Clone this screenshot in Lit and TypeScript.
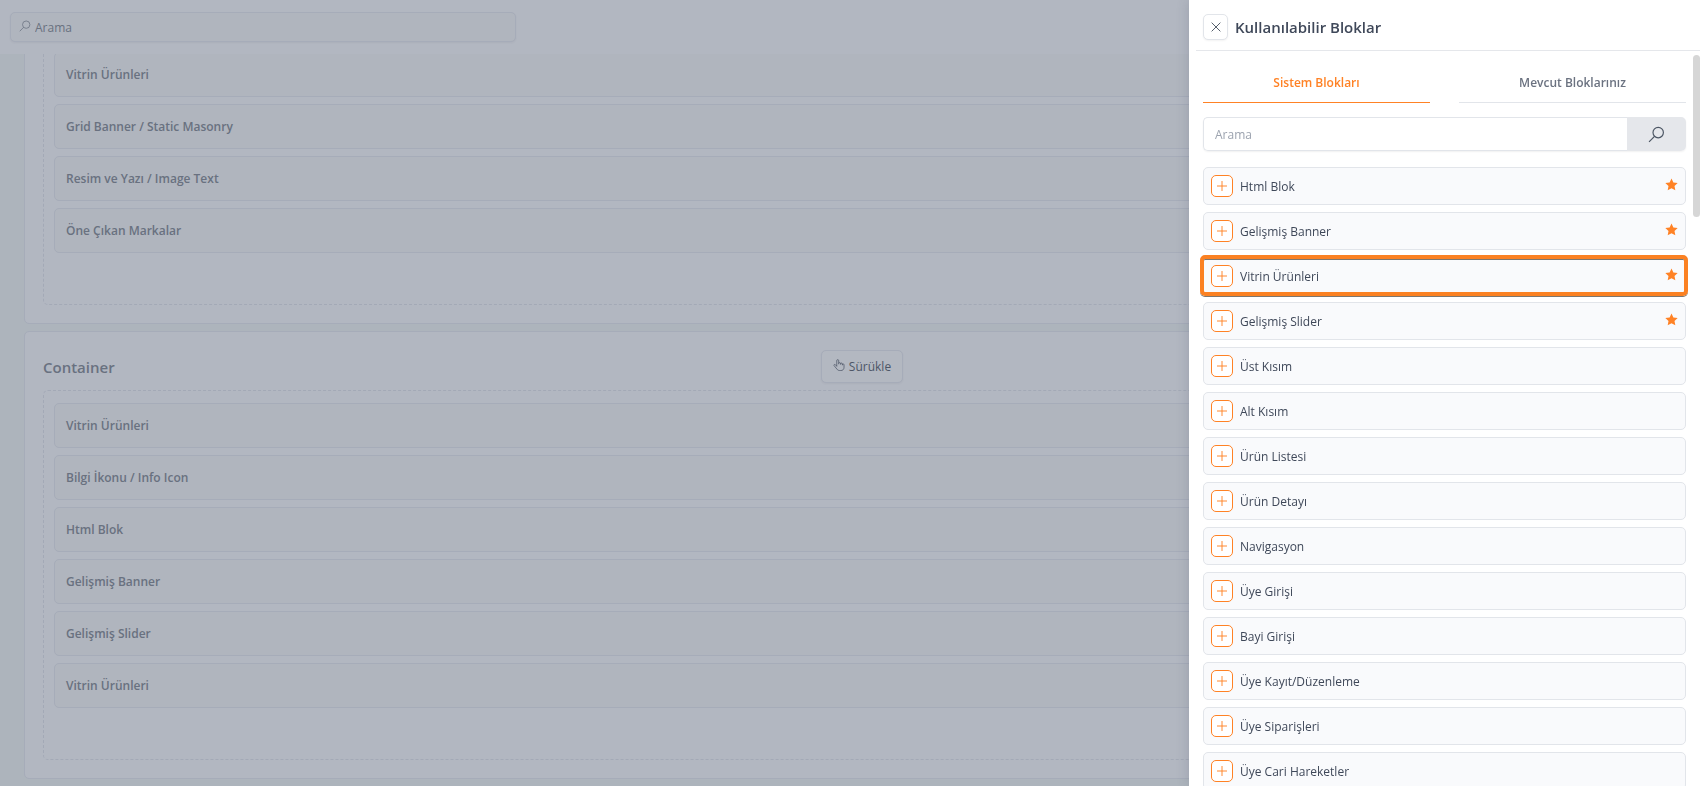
import { LitElement, html, css, svg, nothing } from "lit";
import { customElement, property, state } from "lit/decorators.js";
import { classMap } from "lit/directives/class-map.js";

const magnifier = svg`<circle cx="9.600" cy="6.200" r="4.900"></circle><path d="M6.100 9.800 1 15"></path>`;

const pageIcon = (body: unknown, cls: string) => html`
  <svg class=${cls} viewBox="0 0 16 16" fill="none" stroke="currentColor" aria-hidden="true">${body}</svg>
`;

@customElement("block-container")
class BlockContainer extends LitElement {
  @property() heading = "Container";
  @property({ attribute: false }) blocks: string[] = [];

  static styles = css`
    :host { display: block; }
    .card {
      background: #b2b7c1;
      border: 1px solid #a6acb9;
      border-radius: 5px;
      padding: 18px;
    }
    .head {
      display: grid;
      grid-template-columns: 1fr auto 1fr;
      align-items: center;
      margin-bottom: 7px;
    }
    h2 { margin: 0; font-size: 15px; line-height: 24px; font-weight: 600; color: #697180; }
    .drag {
      display: flex;
      align-items: center;
      gap: 4px;
      height: 33px;
      padding: 1px 11px 0;
      font: inherit;
      color: #4d5667;
      background: #b3b8c1;
      border: 1px solid #a6acb9;
      border-radius: 5px;
      box-shadow: 0 1px 2px rgba(60, 70, 90, 0.06);
    }
    .hand { width: 12px; height: 12px; margin-bottom: 4px; }
    .zone {
      display: grid;
      gap: 7px;
      list-style: none;
      margin: 0;
      padding: 12px 10px 51px;
      border: 1px dashed #a3a9b6;
      border-radius: 5px;
    }
    .block {
      display: flex;
      align-items: center;
      height: 45px;
      box-sizing: border-box;
      padding: 0 11px;
      font-weight: 600;
      color: #697180;
      background: #b0b5be;
      border: 1px solid #a6acb9;
      border-radius: 5px;
    }
  `;

  render() {
    return html`
      <section class="card">
        <div class="head">
          <h2>${this.heading}</h2>
          <button class="drag" type="button">
            ${pageIcon(svg`<path d="M5 10V2.200a1.300 1.300 0 0 1 2.600 0V7m0-1.200a1.300 1.300 0 0 1 2.500 0V7.600m0-1a1.200 1.200 0 0 1 2.400 0V8.400m0-.7a1.100 1.100 0 0 1 2.200 0v3.400c0 2.600-1.600 4.300-4.200 4.300H9c-1.800 0-2.900-.7-3.800-2L1.400 8.800c-.7-1.100.9-2.200 1.900-1.100L5 9.500"></path>`, "hand")}
            <span>Sürükle</span>
          </button>
        </div>
        <ul class="zone">
          ${this.blocks.map((name) => html`<li class="block">${name}</li>`)}
        </ul>
      </section>
    `;
  }
}

@customElement("block-drawer")
class BlockDrawer extends LitElement {
  @state() private tab = 0;

  private blocks = [
    { name: "Html Blok", starred: true },
    { name: "Gelişmiş Banner", starred: true },
    { name: "Vitrin Ürünleri", starred: true, marked: true },
    { name: "Gelişmiş Slider", starred: true },
    { name: "Üst Kısım" },
    { name: "Alt Kısım" },
    { name: "Ürün Listesi" },
    { name: "Ürün Detayı" },
    { name: "Navigasyon" },
    { name: "Üye Girişi" },
    { name: "Bayi Girişi" },
    { name: "Üye Kayıt/Düzenleme" },
    { name: "Üye Siparişleri" },
    { name: "Üye Cari Hareketler" },
  ] as { name: string; starred?: boolean; marked?: boolean }[];

  static styles = css`
    :host {
      display: flex;
      flex-direction: column;
      box-sizing: border-box;
      padding: 0 7px;
      background: #fff;
      color: #3f4859;
      overflow: hidden;
    }
    button { font: inherit; cursor: pointer; }
    .head {
      display: flex;
      align-items: center;
      gap: 7px;
      flex: none;
      height: 46px;
      padding: 4px 7px 0;
      border-bottom: 1px solid #e5e7eb;
    }
    .close {
      display: grid;
      place-items: center;
      width: 25px;
      height: 26px;
      padding: 0;
      color: #4b5563;
      background: #fff;
      border: 1px solid #e2e5ea;
      border-radius: 5px;
      box-shadow: 0 1px 2px rgba(0, 0, 0, 0.05);
    }
    .cross { width: 10px; height: 10px; }
    h1 { margin: 0; font-size: 15px; line-height: 24px; font-weight: 600; }
    .scroller {
      display: grid;
      grid-template-columns: minmax(0, 1fr) 7px;
      column-gap: 7px;
      flex: 1;
      min-height: 0;
      padding: 4px 0 0 7px;
    }
    .thumb { height: 162px; border-radius: 4px; background: #d6d6d6; }
    .tabs { display: grid; grid-template-columns: 1fr 1fr; gap: 29px; margin-bottom: 14px; }
    .tab {
      height: 48px;
      padding: 9px 0 0;
      font-weight: 600;
      color: #6b7280;
      background: none;
      border: 0;
      border-bottom: 1px solid #e2e5ea;
    }
    .tab.active { color: #ff8225; border-bottom-color: #ff8225; }
    .search {
      display: flex;
      height: 34px;
      margin-bottom: 16px;
      border-radius: 5px;
      box-shadow: 0 1px 2px rgba(0, 0, 0, 0.06);
    }
    .search input {
      flex: 1;
      min-width: 0;
      box-sizing: border-box;
      padding: 2px 11px 0;
      font: inherit;
      color: inherit;
      background: #fff;
      border: 1px solid #e2e5ea;
      border-right: 0;
      border-radius: 5px 0 0 5px;
      outline: 0;
    }
    .search input::placeholder { color: #9ca3af; opacity: 1; }
    .search button {
      display: grid;
      place-items: center;
      width: 59px;
      padding: 0;
      color: #4b5563;
      background: #e5e7eb;
      border: 0;
      border-radius: 0 5px 5px 0;
    }
    .glass { width: 17px; height: 17px; stroke-width: 1.1; }
    .list { display: grid; gap: 7px; margin: 0; padding: 0; list-style: none; }
    .item {
      position: relative;
      display: flex;
      align-items: center;
      gap: 7px;
      height: 38px;
      box-sizing: border-box;
      padding: 0 7px;
      background: #f9fafc;
      border: 1px solid #e2e5ea;
      border-radius: 5px;
    }
    .item.marked::after {
      content: "";
      position: absolute;
      inset: -3px -3px -2px -4px;
      border: 4px solid #fb8122;
      border-radius: 5px;
      box-shadow: 0 1px 0 #7d776f, inset 0 1px 0 #7d776f;
      pointer-events: none;
    }
    .add {
      display: grid;
      place-items: center;
      width: 22px;
      height: 22px;
      padding: 0;
      color: #ff8225;
      background: #fff;
      border: 1px solid #ff8225;
      border-radius: 5px;
    }
    .plus { width: 10px; height: 10px; }
    .name { flex: 1; padding-top: 1px; }
    .star { width: 13px; height: 13px; fill: #ff8225; margin-bottom: 3px; }
  `;

  render() {
    return html`
      <header class="head">
        <button class="close" type="button" aria-label="Kapat">
          ${pageIcon(svg`<path d="M1 1 15 15M15 1 1 15" stroke-width="1.500"></path>`, "cross")}
        </button>
        <h1>Kullanılabilir Bloklar</h1>
      </header>
      <div class="scroller">
        <div>
          <div class="tabs" role="tablist">
            ${["Sistem Blokları", "Mevcut Bloklarınız"].map(
              (label, i) => html`
                <button
                  type="button"
                  role="tab"
                  aria-selected=${this.tab === i}
                  class=${classMap({ tab: true, active: this.tab === i })}
                  @click=${() => (this.tab = i)}
                >${label}</button>
              `,
            )}
          </div>
          <form class="search" @submit=${(e: Event) => e.preventDefault()}>
            <input type="text" placeholder="Arama" aria-label="Arama" />
            <button type="submit" aria-label="Arama">${pageIcon(magnifier, "glass")}</button>
          </form>
          <ul class="list">
            ${this.blocks.map(
              (b) => html`
                <li class=${classMap({ item: true, marked: !!b.marked })}>
                  <button class="add" type="button" aria-label=${b.name}>
                    ${pageIcon(svg`<path d="M8 0V16M0 8H16" stroke-width="1.500"></path>`, "plus")}
                  </button>
                  <span class="name">${b.name}</span>
                  ${b.starred
                    ? html`<svg class="star" viewBox="0 0 16 16" aria-hidden="true">
                        <path d="M8 .5l2.300 4.900 5.300.7-3.900 3.700 1 5.400L8 12.600 3.300 15.200l1-5.400L.4 6.100l5.300-.7z"></path>
                      </svg>`
                    : nothing}
                </li>
              `,
            )}
          </ul>
        </div>
        <div class="thumb"></div>
      </div>
    `;
  }
}

@customElement("app-root")
class AppRoot extends LitElement {
  static styles = css`
    :host {
      display: block;
      height: 100vh;
      overflow: hidden;
      background: #adb4bc;
      font-family: "Open Sans", "Noto Sans", sans-serif;
      font-size: 12px;
      line-height: 20px;
    }
    .topbar {
      position: relative;
      z-index: 1;
      height: 54px;
      box-sizing: border-box;
      padding: 12px 10px;
      background: #b2b7c1;
    }
    .search {
      display: flex;
      align-items: center;
      gap: 4px;
      width: 30%;
      min-width: 200px;
      height: 30px;
      box-sizing: border-box;
      padding: 0 8px;
      color: #697180;
      background: #b0b5be;
      border: 1px solid #a6acb9;
      border-radius: 5px;
      box-shadow: 0 1px 2px rgba(60, 70, 90, 0.06);
    }
    .glass { width: 12px; height: 12px; flex: none; margin-bottom: 3px; }
    .search input {
      flex: 1;
      min-width: 0;
      padding: 2px 0 0;
      font: inherit;
      color: inherit;
      background: none;
      border: 0;
      outline: 0;
    }
    .search input::placeholder { color: inherit; opacity: 1; }
    .canvas {
      display: grid;
      gap: 7px;
      margin-top: -74px;
      padding: 0 7px 7px 24px;
    }
    .drawer {
      position: fixed;
      inset: 0 0 0 auto;
      z-index: 2;
      width: 518px;
      max-width: 100%;
      box-shadow: 0 0 12px rgba(60, 70, 90, 0.2);
    }
  `;

  render() {
    return html`
      <header class="topbar">
        <label class="search">
          ${pageIcon(magnifier, "glass")}
          <input type="text" placeholder="Arama" aria-label="Arama" />
        </label>
      </header>
      <main class="canvas">
        <block-container
          .blocks=${["Vitrin Ürünleri", "Grid Banner / Static Masonry", "Resim ve Yazı / Image Text", "Öne Çıkan Markalar"]}
        ></block-container>
        <block-container
          .blocks=${["Vitrin Ürünleri", "Bilgi İkonu / Info Icon", "Html Blok", "Gelişmiş Banner", "Gelişmiş Slider", "Vitrin Ürünleri"]}
        ></block-container>
      </main>
      <block-drawer class="drawer"></block-drawer>
    `;
  }
}
